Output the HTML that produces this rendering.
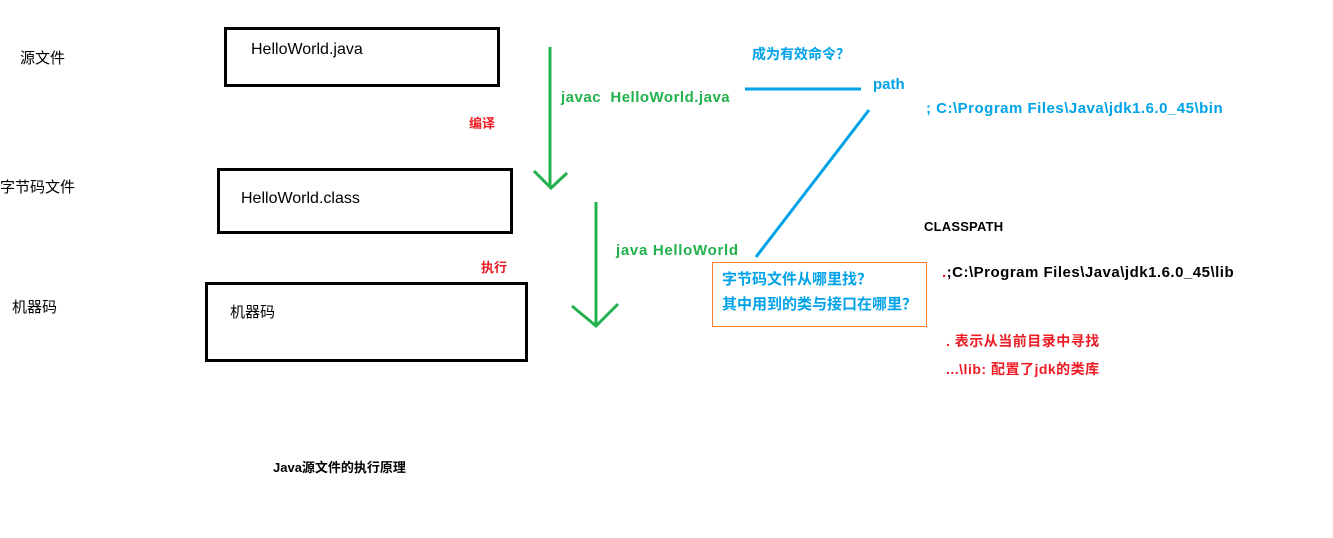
<!DOCTYPE html>
<html><head><meta charset="utf-8"><style>
body{margin:0;width:1333px;height:538px;background:#fff;position:relative;overflow:hidden;font-family:"Liberation Sans","Noto Sans CJK SC",sans-serif}
.t{position:absolute;white-space:nowrap;line-height:16px}
.box{position:absolute;border:3px solid #000;box-sizing:border-box}
.g{color:#22b14c;font-weight:bold;font-size:15px;letter-spacing:0.5px}
.b{color:#00a2e8;font-weight:bold;font-size:14px}
.r{color:#ed1c24;font-weight:bold;font-size:13px}
.k{color:#000;font-weight:bold;font-size:14px}
</style></head><body>
<div class="box" style="left:224px;top:27px;width:276px;height:60px"></div>
<div class="box" style="left:217px;top:168px;width:296px;height:66px"></div>
<div class="box" style="left:205px;top:282px;width:323px;height:80px"></div>
<div style="position:absolute;left:712px;top:262px;width:215px;height:65px;border:1px solid #ff7f27;box-sizing:border-box"></div>
<svg width="1333" height="538" style="position:absolute;left:0;top:0">
<g stroke="#22b14c" stroke-width="3" fill="none">
<line x1="550" y1="47" x2="550" y2="188"/>
<polyline points="534,171 551,188 567,173"/>
<line x1="596" y1="202" x2="596" y2="326"/>
<polyline points="572,306 596,326 618,304"/>
</g>
<g stroke="#00a2e8" stroke-width="3" fill="none">
<line x1="745" y1="89" x2="861" y2="89"/>
<line x1="869" y1="110" x2="756" y2="257"/>
</g>
</svg>
<span class="t" style="left:20px;top:51px;font-size:15px">源文件</span>
<span class="t" style="left:0px;top:180px;font-size:15px">字节码文件</span>
<span class="t" style="left:12px;top:300px;font-size:15px">机器码</span>
<span class="t" style="left:251px;top:42px;font-size:16px">HelloWorld.java</span>
<span class="t" style="left:241px;top:191px;font-size:16px">HelloWorld.class</span>
<span class="t" style="left:230px;top:305px;font-size:15px">机器码</span>
<span class="t r" style="left:469px;top:116px">编译</span>
<span class="t r" style="left:481px;top:260px">执行</span>
<span class="t g" style="left:561px;top:90px">javac&nbsp; HelloWorld.java</span>
<span class="t g" style="left:616px;top:243px;letter-spacing:0.7px">java HelloWorld</span>
<span class="t b" style="left:752px;top:46px;font-size:14px">成为有效命令？</span>
<span class="t b" style="left:873px;top:77px;font-size:15px">path</span>
<span class="t b" style="left:926px;top:101px;font-size:15px;letter-spacing:0.5px">; C:\Program Files\Java\jdk1.6.0_45\bin</span>
<span class="t k" style="left:924px;top:219px;font-size:13px;letter-spacing:0.2px">CLASSPATH</span>
<span class="t k" style="left:942px;top:265px;font-size:15px;letter-spacing:0.5px"><span style="color:#ed1c24">.</span>;C:\Program Files\Java\jdk1.6.0_45\lib</span>
<span class="t b" style="left:722px;top:272px;font-size:15px">字节码文件从哪里找？</span>
<span class="t b" style="left:722px;top:297px;font-size:15px">其中用到的类与接口在哪里？</span>
<span class="t r" style="left:946px;top:333px;font-size:14px;letter-spacing:0.5px">. 表示从当前目录中寻找</span>
<span class="t r" style="left:946px;top:361px;font-size:14px;letter-spacing:0.5px">...\lib: 配置了jdk的类库</span>
<span class="t k" style="left:273px;top:460px;font-size:13px">Java源文件的执行原理</span>
</body></html>
